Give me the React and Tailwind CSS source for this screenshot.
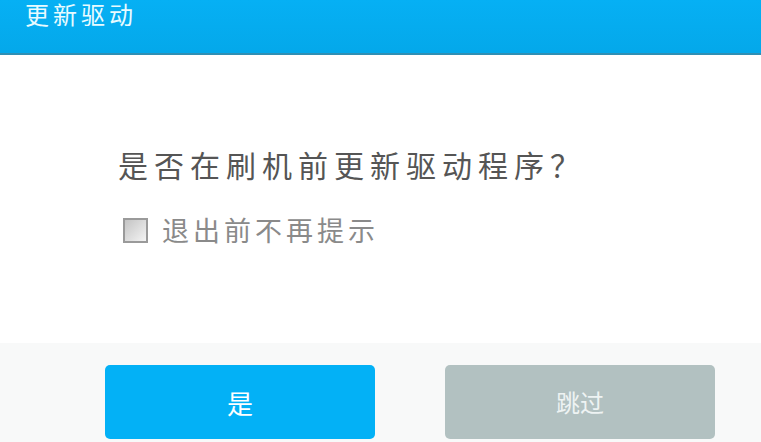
export default function App() {
  const font = { fontFamily: '"Noto Sans CJK SC", "Noto Sans", sans-serif' };
  return (
    <div className="w-[761px] h-[442px] overflow-hidden bg-white flex flex-col" style={font}>
      <div className="h-[55px] shrink-0 bg-gradient-to-b from-[#06b0f4] to-[#04a8ea] border-b-2 border-[#2f8fb4] flex items-start">
        <div className="ml-[25px] mt-0 text-[24px] leading-[28px] tracking-[4px] text-[#e8fbff]">更新驱动</div>
      </div>
      <div className="h-[288px] shrink-0 bg-white flex flex-col pl-[118px] pt-[89px]">
        <div className="text-[30px] leading-[40px] tracking-[6px] text-[#555555]">是否在刷机前更新驱动程序？</div>
        <div className="mt-[28px] flex items-center">
          <div className="w-[25px] h-[25px] ml-[5px] border-2 border-[#9a9a9a] bg-gradient-to-br from-[#c4c4c4] to-[#f4f4f4]"></div>
          <div className="ml-[14px] text-[27px] leading-[36px] tracking-[4px] text-[#8a8a8a]">退出前不再提示</div>
        </div>
      </div>
      <div className="flex-1 bg-[#f8f9f9] flex items-start pt-[22px]">
        <button className="ml-[105px] w-[270px] h-[74px] rounded-[5px] bg-[#03b1f6] text-white text-[26px] flex items-center justify-center">是</button>
        <button className="ml-[70px] w-[270px] h-[74px] rounded-[5px] bg-[#b2c1c1] text-[#eef3f3] text-[24px] flex items-center justify-center">跳过</button>
      </div>
    </div>
  );
}
